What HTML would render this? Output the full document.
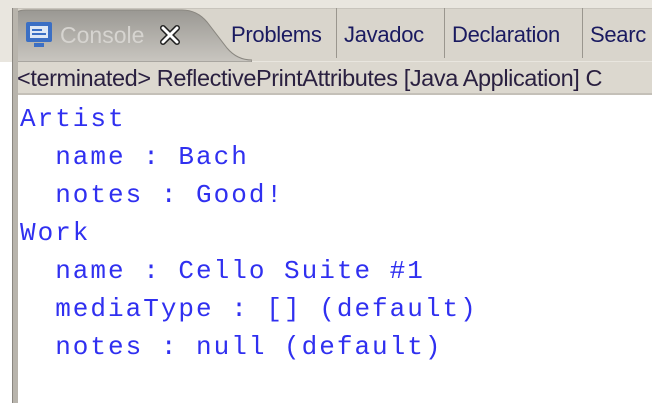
<!DOCTYPE html>
<html><head><style>
body{margin:0;width:652px;height:403px;background:#fff;position:relative;overflow:hidden;font-family:"Liberation Sans",sans-serif}
.top{position:absolute;left:0;top:0;width:652px;height:62px;background:#e9e6df}
.tabbar{position:absolute;left:12px;top:8px;width:640px;height:52px;background:#d9d5cc;border-top:1px solid #c8c4bc}
.ctab{position:absolute;left:12px;top:8px;width:240px;height:54px}
.tab{position:absolute;top:8px;height:50px;border-left:1px solid #9a968e;font-size:22px;color:#1a1a60;line-height:54px;padding-left:7px;letter-spacing:-0.3px}
.info{position:absolute;left:12px;top:62px;width:640px;height:33px;background:#dcd8cf;border-bottom:2px solid #c4c0b8;font-size:23.5px;line-height:33px;color:#2a2040;padding-left:5px;white-space:nowrap;box-sizing:border-box;letter-spacing:-0.4px}
.lb{position:absolute;left:12px;top:8px;width:5px;height:395px;background:#b8b4ac;border-left:1px solid #8a8680}
.code{position:absolute;left:20px;top:100px;font-family:"Liberation Mono",monospace;font-size:26px;letter-spacing:2px;color:#3030f0;line-height:38px;white-space:pre}
</style></head><body>
<div class="top"></div>
<div class="tabbar"></div>
<svg class="ctab" width="240" height="54" viewBox="0 0 240 54">
<defs><linearGradient id="g" x1="0" y1="0" x2="0" y2="1"><stop offset="0" stop-color="#9a9893"/><stop offset="1" stop-color="#c9c6c0"/></linearGradient></defs>
<path d="M0 54 V14 Q0 2 14 2 H170 Q185 2 195 14 L215 40 Q225 52 240 52 V54 Z" fill="url(#g)" stroke="#8a8780"/>
<rect x="14" y="14" width="26" height="20" rx="2" fill="#3b6fc4"/><rect x="18" y="18" width="18" height="12" fill="#dfe8f5"/><rect x="20" y="21" width="10" height="2" fill="#3b6fc4"/><rect x="20" y="25" width="14" height="2" fill="#3b6fc4"/><rect x="22" y="35" width="10" height="4" fill="#3b6fc4"/>
<text x="48" y="35" font-family="Liberation Sans" font-size="23" fill="#d6d4d0">Console</text>
<path d="M151 20 L165 34 M165 20 L151 34" stroke="#222" stroke-width="6" stroke-linecap="round"/>
<path d="M151 20 L165 34 M165 20 L151 34" stroke="#fff" stroke-width="3" stroke-linecap="round"/>
</svg>
<div class="tab" style="left:224px;border-left:none;">Problems</div>
<div class="tab" style="left:336px">Javadoc</div>
<div class="tab" style="left:444px">Declaration</div>
<div class="tab" style="left:582px">Searc</div>
<div class="info">&lt;terminated&gt; ReflectivePrintAttributes [Java Application] C</div>
<div class="lb"></div>
<div class="code">Artist
  name : Bach
  notes : Good!
Work
  name : Cello Suite #1
  mediaType : [] (default)
  notes : null (default)</div>
</body></html>
